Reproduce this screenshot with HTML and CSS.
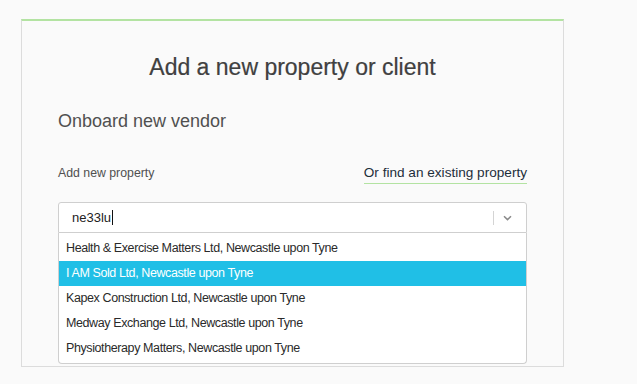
FILE: index.html
```html
<!DOCTYPE html>
<html lang="en">
<head>
<meta charset="utf-8">
<title>Add a new property or client</title>
<link rel="stylesheet" href="styles.css">
</head>
<body>
<div class="page">
  <section class="card">
    <h1 class="title">Add a new property or client</h1>
    <h2 class="subtitle">Onboard new vendor</h2>
    <div class="field-row">
      <span class="label">Add new property</span>
      <a class="link" href="#">Or find an existing property</a>
    </div>
    <div class="select">
      <div class="control">
        <span class="value">ne33lu<span class="caret"></span></span>
        <span class="indicators">
          <span class="sep"></span>
          <svg class="chev" width="9" height="6" viewBox="0 0 9 6"><path d="M1 1.2 L4.5 4.6 L8 1.2" fill="none" stroke="#8a8a8a" stroke-width="1.5"/></svg>
        </span>
      </div>
      <ul class="menu">
        <li class="opt">Health &amp; Exercise Matters Ltd, Newcastle upon Tyne</li>
        <li class="opt active">I AM Sold Ltd, Newcastle upon Tyne</li>
        <li class="opt">Kapex Construction Ltd, Newcastle upon Tyne</li>
        <li class="opt">Medway Exchange Ltd, Newcastle upon Tyne</li>
        <li class="opt">Physiotherapy Matters, Newcastle upon Tyne</li>
      </ul>
    </div>
  </section>
</div>
</body>
</html>
```

FILE: styles.css
```css
html, body {
  margin: 0;
  padding: 0;
  background: #fafafa;
  font-family: "Liberation Sans", Arial, sans-serif;
}
.page {
  padding: 19px 0 0 21px;
  height: 365px;
}
.card {
  box-sizing: border-box;
  width: 543px;
  height: 348px;
  background: #fafafa;
  border: 1px solid #dcdcdc;
  border-top: 2px solid #b3e3a2;
  padding: 33px 36px 0 36px;
}
.title {
  margin: 0;
  font-size: 23px;
  line-height: 26px;
  font-weight: normal;
  color: #404040;
  text-align: center;
  -webkit-text-stroke: 0.2px #404040;
}
.subtitle {
  margin: 30px 0 0 0;
  font-size: 18px;
  line-height: 22px;
  font-weight: normal;
  color: #505050;
}
.field-row {
  margin-top: 32px;
  display: flex;
  justify-content: space-between;
  align-items: baseline;
}
.label {
  font-size: 12.3px;
  color: #505050;
}
.link {
  display: inline-block;
  font-size: 13.6px;
  line-height: 18px;
  padding-bottom: 1px;
  color: #1d2e3b;
  text-decoration: none;
  border-bottom: 1px solid #b3e3a2;
}
.select {
  margin-top: 18px;
}
.control {
  box-sizing: border-box;
  height: 31px;
  background: #fff;
  border: 1px solid #cfcfcf;
  border-radius: 3px 3px 0 0;
  display: flex;
  align-items: center;
  padding: 0 14px 0 13px;
}
.value {
  flex: 1;
  font-size: 13px;
  color: #222;
  display: flex;
  align-items: center;
}
.caret {
  display: inline-block;
  width: 1px;
  height: 15px;
  background: #111;
  margin-left: 1px;
}
.indicators {
  display: flex;
  align-items: center;
  gap: 9px;
}
.sep {
  width: 1px;
  height: 14px;
  background: #d4d4d4;
}
.chev {
  display: block;
}
.menu {
  list-style: none;
  margin: 0;
  padding: 3px 0 2px 0;
  background: #fff;
  border: 1px solid #cfcfcf;
  border-top: none;
  border-radius: 0 0 4px 4px;
}
.opt {
  height: 25px;
  line-height: 25px;
  padding-left: 7px;
  font-size: 12.5px;
  letter-spacing: -0.4px;
  color: #2a2a2a;
}
.opt.active {
  background: #20bfe6;
  color: #fff;
}
```
